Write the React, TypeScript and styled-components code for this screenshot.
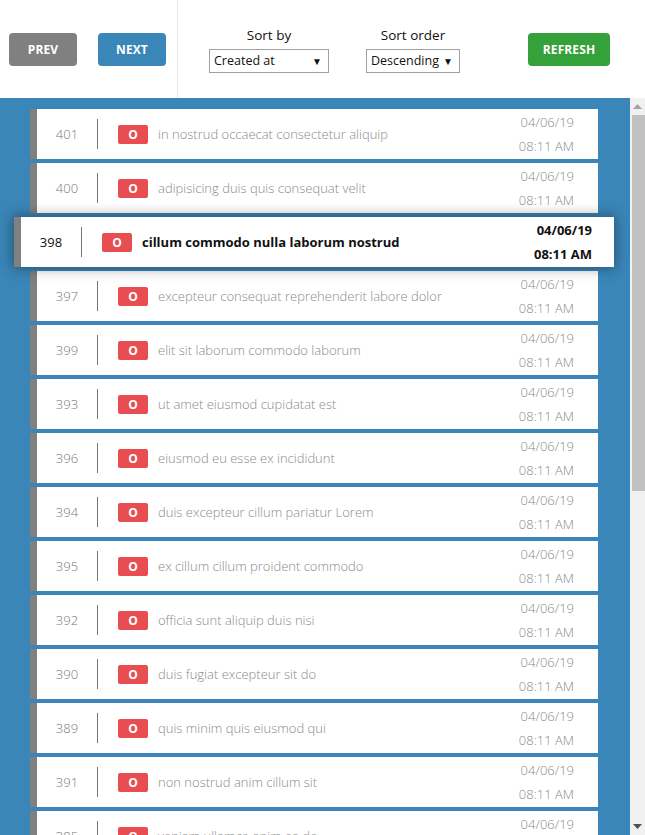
import React from "react";
import styled, { createGlobalStyle } from "styled-components";

const GlobalStyle = createGlobalStyle`
  html, body {
    margin: 0;
    padding: 0;
    height: 100%;
    overflow: hidden;
    font-family: "Open Sans", "Noto Sans", "Liberation Sans", sans-serif;
  }
  * { box-sizing: border-box; }
`;

const Page = styled.div`
  display: flex;
  flex-direction: column;
  height: 835px;
  width: 645px;
  background: #ffffff;
`;

const Toolbar = styled.div`
  display: flex;
  align-items: center;
  height: 98px;
  flex: none;
  padding-left: 9px;
  background: #ffffff;
`;

const Button = styled.button<{ $bg: string; $w: number; $ml?: number }>`
  width: ${(p) => p.$w}px;
  height: 33px;
  margin-left: ${(p) => p.$ml ?? 0}px;
  border: none;
  border-radius: 4px;
  background: ${(p) => p.$bg};
  color: #ffffff;
  font-family: "Open Sans", "Noto Sans", sans-serif;
  font-weight: 700;
  font-size: 12px;
  letter-spacing: 0.1px;
  padding: 0;
  cursor: pointer;
`;

const Divider = styled.div`
  align-self: stretch;
  width: 1px;
  background: #e6e6e6;
  margin-left: 11px;
`;

const SortGroup = styled.div<{ $ml: number }>`
  display: flex;
  flex-direction: column;
  align-items: center;
  margin-left: ${(p) => p.$ml}px;
`;

const SortLabel = styled.div`
  font-size: 13.5px;
  color: #111;
  line-height: 18px;
  margin-bottom: 5px;
`;

const SelectBox = styled.div<{ $w: number }>`
  display: flex;
  align-items: center;
  justify-content: space-between;
  width: ${(p) => p.$w}px;
  height: 24px;
  border: 1px solid #a0a0a0;
  padding: 0 6px 0 4px;
  font-size: 12.5px;
  color: #111;
  background: #fff;
`;

const Arrow = styled.span`
  font-size: 10px;
  color: #111;
  line-height: 1;
`;

const ListArea = styled.div`
  flex: 1;
  min-height: 0;
  display: flex;
  background: #3a86b8;
`;

const Viewport = styled.div`
  flex: 1;
  min-width: 0;
  overflow: hidden;
`;

const ScrollTrack = styled.div`
  width: 15px;
  flex: none;
  display: flex;
  flex-direction: column;
  align-items: flex-end;
  background: #f1f1f1;
`;

const ScrollButton = styled.div`
  width: 15px;
  height: 17px;
  display: flex;
  align-items: center;
  justify-content: center;
  flex: none;
`;

const Thumb = styled.div`
  width: 13px;
  height: 376px;
  background: #c1c1c1;
  flex: none;
`;

const Spacer = styled.div`
  flex: 1;
`;

const List = styled.div`
  display: flex;
  flex-direction: column;
  gap: 4px;
  padding: 11px 32px 10px 30px;
`;

const Row = styled.div<{ $sel?: boolean }>`
  display: flex;
  align-items: center;
  height: 50px;
  flex: none;
  background: #ffffff;
  border-left: 7px solid #808080;
  margin: ${(p) => (p.$sel ? "0 -16px" : "0")};
  padding-right: ${(p) => (p.$sel ? "22px" : "24px")};
  box-shadow: ${(p) => (p.$sel ? "0 0 12px 2px rgba(0,0,0,0.35)" : "none")};
  position: relative;
  z-index: ${(p) => (p.$sel ? 1 : 0)};
`;

const Num = styled.div<{ $sel?: boolean }>`
  width: 60px;
  text-align: center;
  font-size: 13px;
  color: ${(p) => (p.$sel ? "#111" : "#777")};
  font-weight: ${(p) => (p.$sel ? 400 : 300)};
`;

const VLine = styled.div`
  width: 1px;
  height: 30px;
  background: #777;
`;

const Badge = styled.div`
  width: 30px;
  height: 19px;
  margin-left: 20px;
  border-radius: 2px;
  background: #e84e51;
  color: #fff;
  font-size: 12px;
  font-weight: 700;
  display: flex;
  align-items: center;
  justify-content: center;
`;

const Title = styled.div<{ $sel?: boolean }>`
  flex: 1;
  margin-left: 10px;
  font-size: 13px;
  font-weight: ${(p) => (p.$sel ? 700 : 300)};
  color: ${(p) => (p.$sel ? "#111" : "#8a8a8a")};
  white-space: nowrap;
`;

const DateCol = styled.div<{ $sel?: boolean }>`
  display: flex;
  flex-direction: column;
  align-items: flex-end;
  font-size: 13px;
  line-height: 24px;
  font-weight: ${(p) => (p.$sel ? 700 : 300)};
  color: ${(p) => (p.$sel ? "#111" : "#8a8a8a")};
`;

const items: [number, string][] = [
  [401, "in nostrud occaecat consectetur aliquip"],
  [400, "adipisicing duis quis consequat velit"],
  [398, "cillum commodo nulla laborum nostrud"],
  [397, "excepteur consequat reprehenderit labore dolor"],
  [399, "elit sit laborum commodo laborum"],
  [393, "ut amet eiusmod cupidatat est"],
  [396, "eiusmod eu esse ex incididunt"],
  [394, "duis excepteur cillum pariatur Lorem"],
  [395, "ex cillum cillum proident commodo"],
  [392, "officia sunt aliquip duis nisi"],
  [390, "duis fugiat excepteur sit do"],
  [389, "quis minim quis eiusmod qui"],
  [391, "non nostrud anim cillum sit"],
  [385, "veniam ullamco anim ea do"],
  [388, "labore aute irure deserunt magna"],
  [387, "nisi velit tempor consequat amet"],
];

export default function App() {
  return (
    <Page>
      <GlobalStyle />
      <Toolbar>
        <Button $bg="#808080" $w={68}>PREV</Button>
        <Button $bg="#3a86b8" $w={68} $ml={21}>NEXT</Button>
        <Divider />
        <SortGroup $ml={31}>
          <SortLabel>Sort by</SortLabel>
          <SelectBox $w={120}>
            <span>Created at</span>
            <Arrow>▼</Arrow>
          </SelectBox>
        </SortGroup>
        <SortGroup $ml={37}>
          <SortLabel>Sort order</SortLabel>
          <SelectBox $w={94}>
            <span>Descending</span>
            <Arrow>▼</Arrow>
          </SelectBox>
        </SortGroup>
        <Button $bg="#34a13a" $w={82} $ml={68}>REFRESH</Button>
      </Toolbar>
      <ListArea>
        <Viewport>
          <List>
            {items.map(([n, t]) => {
              const sel = n === 398;
              return (
                <Row key={n} $sel={sel}>
                  <Num $sel={sel}>{n}</Num>
                  <VLine />
                  <Badge>O</Badge>
                  <Title $sel={sel}>{t}</Title>
                  <DateCol $sel={sel}>
                    <span>04/06/19</span>
                    <span>08:11 AM</span>
                  </DateCol>
                </Row>
              );
            })}
          </List>
        </Viewport>
        <ScrollTrack>
          <ScrollButton>
            <svg width="9" height="5" viewBox="0 0 9 5">
              <polygon points="0,5 4.5,0 9,5" fill="#a3a3a3" />
            </svg>
          </ScrollButton>
          <Thumb />
          <Spacer />
          <ScrollButton>
            <svg width="9" height="5" viewBox="0 0 9 5">
              <polygon points="0,0 4.5,5 9,0" fill="#505050" />
            </svg>
          </ScrollButton>
        </ScrollTrack>
      </ListArea>
    </Page>
  );
}
